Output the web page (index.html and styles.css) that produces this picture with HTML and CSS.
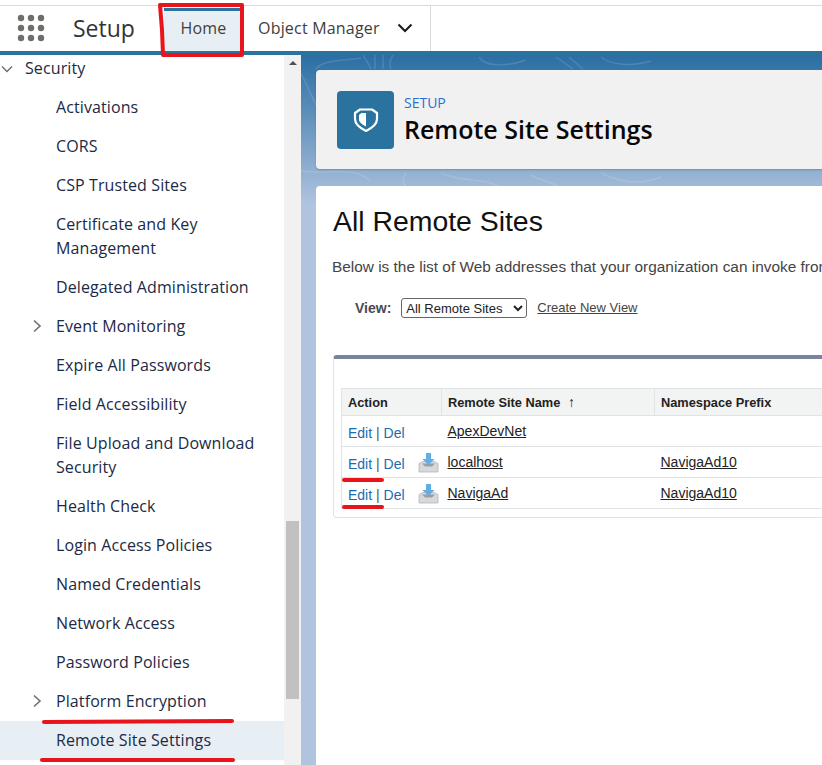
FILE: index.html
```html
<!DOCTYPE html>
<html lang="en">
<head>
    <meta charset="UTF-8">
    <meta name="viewport" content="width=device-width, initial-scale=1.0">
    <title>Remote Site Settings</title>
    <link rel="stylesheet" href="styles.css">
</head>
<body>
    <header class="top-bar">
        <svg class="waffle" width="30" height="30" viewBox="0 0 30 30">
            <g fill="#706e6b">
                <circle cx="5" cy="5" r="3.2"/><circle cx="15" cy="5" r="3.2"/><circle cx="25" cy="5" r="3.2"/>
                <circle cx="5" cy="15" r="3.2"/><circle cx="15" cy="15" r="3.2"/><circle cx="25" cy="15" r="3.2"/>
                <circle cx="5" cy="25" r="3.2"/><circle cx="15" cy="25" r="3.2"/><circle cx="25" cy="25" r="3.2"/>
            </g>
        </svg>
        <span class="app-name">Setup</span>
        <a class="tab tab-active">Home</a>
        <a class="tab tab-object">Object Manager
            <svg width="16" height="10" viewBox="0 0 16 10"><path d="M1.500 1.500 8 8l6.500-6.500" fill="none" stroke="#1a1a1a" stroke-width="2"/></svg>
        </a>
    </header>

    <div class="layout">
        <aside class="sidebar">
            <ul class="nav">
                <li class="nav-item nav-root">
                    <svg class="twist" width="12" height="12" viewBox="0 0 12 12"><path d="M1 3.500 6 8.500l5-5" fill="none" stroke="#706e6b" stroke-width="1.4"/></svg>
                    Security
                </li>
                <li class="nav-item">Activations</li>
                <li class="nav-item">CORS</li>
                <li class="nav-item">CSP Trusted Sites</li>
                <li class="nav-item">Certificate and Key Management</li>
                <li class="nav-item">Delegated Administration</li>
                <li class="nav-item">
                    <svg class="twist-right" width="12" height="14" viewBox="0 0 12 14"><path d="M3 1.500 9 7l-6 5.500" fill="none" stroke="#706e6b" stroke-width="1.6"/></svg>
                    Event Monitoring
                </li>
                <li class="nav-item">Expire All Passwords</li>
                <li class="nav-item">Field Accessibility</li>
                <li class="nav-item">File Upload and Download Security</li>
                <li class="nav-item">Health Check</li>
                <li class="nav-item">Login Access Policies</li>
                <li class="nav-item">Named Credentials</li>
                <li class="nav-item">Network Access</li>
                <li class="nav-item">Password Policies</li>
                <li class="nav-item">
                    <svg class="twist-right" width="12" height="14" viewBox="0 0 12 14"><path d="M3 1.500 9 7l-6 5.500" fill="none" stroke="#706e6b" stroke-width="1.6"/></svg>
                    Platform Encryption
                </li>
                <li class="nav-item nav-current">Remote Site Settings</li>
            </ul>
        </aside>
        <div class="scrollbar">
            <span class="scroll-up"></span>
            <span class="scroll-thumb"></span>
        </div>

        <main class="content">
            <svg class="topo" width="521" height="140" viewBox="0 0 521 140" fill="none" stroke="#ffffff" stroke-opacity="0.13" stroke-width="1.5">
                <path d="M0 18C10 40 20 60 30 80"/>
                <path d="M15 14C22 4 45 6 60 3"/>
                <path d="M62 0C66 6 68 10 70 14M74 0V14M82 0V14M92 0C88 6 88 10 90 14"/>
                <path d="M178 2C184 12 205 12 225 5"/>
                <path d="M255 2 272 14M268 2 282 14M300 2C310 10 330 12 350 6"/>
                <path d="M0 116C30 120 50 110 70 126M105 118C100 124 102 130 108 134"/>
                <path d="M140 118C160 128 190 122 200 134M230 120C240 126 250 126 262 134M300 118C320 128 340 130 360 122"/>
            </svg>

            <section class="page-head">
                <div class="head-icon">
                    <svg width="26" height="26" viewBox="0 0 26 26">
                        <path d="M7 2.500h12l5 3.500v6c0 5.500-5 9-11 12C7 21 2 17.500 2 12V6z" fill="none" stroke="#fff" stroke-width="2.200" stroke-linejoin="round"/>
                        <path d="M13 6H8.500L6 8v4.500c0 2.700 3 5 7 7z" fill="#fff"/>
                    </svg>
                </div>
                <div>
                    <div class="head-kicker">SETUP</div>
                    <h1 class="head-title">Remote Site Settings</h1>
                </div>
            </section>

            <section class="page-body">
                <h2 class="body-title">All Remote Sites</h2>
                <p class="body-intro">Below is the list of Web addresses that your organization can invoke from your users.</p>
                <div class="view-row">
                    <label class="view-label" for="viewSelect">View:</label>
                    <select id="viewSelect" class="view-select">
                        <option>All Remote Sites</option>
                    </select>
                    <a class="view-link">Create New View</a>
                </div>

                <div class="list-box">
                    <table class="list-table">
                        <thead>
                            <tr>
                                <th class="col-action">Action</th>
                                <th class="col-name">Remote Site Name <span class="sort-arrow">↑</span></th>
                                <th class="col-prefix">Namespace Prefix</th>
                                <th></th>
                            </tr>
                        </thead>
                        <tbody>
                            <tr>
                                <td class="action-cell"><a class="row-link">Edit</a> <span class="sep">|</span> <a class="row-link">Del</a></td>
                                <td><a class="name-link">ApexDevNet</a></td>
                                <td></td>
                                <td></td>
                            </tr>
                            <tr>
                                <td class="action-cell">
                                    <a class="row-link">Edit</a> <span class="sep">|</span> <a class="row-link">Del</a>
                                    <svg class="install-icon" width="21" height="21" viewBox="0 0 21 21">
                                        <path d="M1 11.500 6 9h9l5 2.500V20H1z" fill="#d6d8da" stroke="#b4b8ba" stroke-width="0.800"/>
                                        <path d="M4 11.500h13l-3 3H7z" fill="#9a9fa2"/>
                                        <path d="M8 1h5v6h3.500l-6 6-6-6H8z" fill="#62ade3"/>
                                    </svg>
                                </td>
                                <td><a class="name-link">localhost</a></td>
                                <td><a class="name-link">NavigaAd10</a></td>
                                <td></td>
                            </tr>
                            <tr>
                                <td class="action-cell">
                                    <a class="row-link">Edit</a> <span class="sep">|</span> <a class="row-link">Del</a>
                                    <svg class="install-icon" width="21" height="21" viewBox="0 0 21 21">
                                        <path d="M1 11.500 6 9h9l5 2.500V20H1z" fill="#d6d8da" stroke="#b4b8ba" stroke-width="0.800"/>
                                        <path d="M4 11.500h13l-3 3H7z" fill="#9a9fa2"/>
                                        <path d="M8 1h5v6h3.500l-6 6-6-6H8z" fill="#62ade3"/>
                                    </svg>
                                </td>
                                <td><a class="name-link">NavigaAd</a></td>
                                <td><a class="name-link">NavigaAd10</a></td>
                                <td></td>
                            </tr>
                        </tbody>
                    </table>
                </div>
            </section>
        </main>
    </div>

    <!-- red marker annotations drawn on top of the screenshot -->
    <svg class="markup" width="822" height="765" viewBox="0 0 822 765" fill="none" stroke="#e8141c" stroke-width="4" stroke-linecap="round" stroke-linejoin="round">
        <path d="M160 5H242V55H163L162 30z"/>
        <path d="M44 722 232 721"/>
        <path d="M42 760 233 760"/>
        <path d="M344 480H382"/>
        <path d="M344 507H382"/>
    </svg>
</body>
</html>
```

FILE: styles.css
```css
html, body {
    margin: 0;
    height: 765px;
    overflow: hidden;
}

body {
    font-family: "Open Sans", "Noto Sans", sans-serif;
    background: #fff;
    display: flex;
    flex-direction: column;
    position: relative;
}

/* Top bar */
.top-bar {
    display: flex;
    align-items: stretch;
    flex: none;
    height: 45px;
    margin-top: 5px;
    border-top: 1px solid #dddbda;
    border-bottom: 4px solid #2a739e;
}

.waffle {
    margin: 7px 0 0 16px;
}

.app-name {
    font-size: 23px;
    color: #333;
    line-height: 44px;
    margin-left: 27px;
    width: 91px;
}

.tab {
    font-size: 16px;
    letter-spacing: 0.2px;
    color: #3e3e3c;
    display: flex;
    align-items: center;
}

.tab-active {
    width: 77px;
    margin-top: 2px;
    padding: 0 0 6px 2px;
    justify-content: center;
    background: #e8eff4;
    border-top: 3px solid #2a739e;
    box-sizing: border-box;
}

.tab-object {
    padding: 0 0 2px 17px;
    width: 190px;
    box-sizing: border-box;
    border-right: 1px solid #dddbda;
    gap: 17px;
}

/* Main layout */
.layout {
    flex: 1;
    display: flex;
    min-height: 0;
}

.sidebar {
    width: 284px;
    flex: none;
    overflow: hidden;
}

.nav {
    list-style: none;
    margin: 0;
    padding: 0;
}

.nav-item {
    font-size: 16px;
    letter-spacing: 0.1px;
    line-height: 24px;
    color: #1b2a45;
    padding: 7px 20px 8px 56px;
    position: relative;
}

.nav-root {
    padding: 1px 20px 8px 25px;
}

.nav-current {
    background: #e8eff4;
}

.twist {
    position: absolute;
    left: 1px;
    top: 8px;
}

.twist-right {
    position: absolute;
    left: 31px;
    top: 12px;
}

.scrollbar {
    width: 17px;
    flex: none;
    background: #f1f1f1;
    display: flex;
    flex-direction: column;
    align-items: center;
}

.scroll-up {
    margin-top: 6px;
    border-left: 4px solid transparent;
    border-right: 4px solid transparent;
    border-bottom: 4px solid #505050;
}

.scroll-thumb {
    margin-top: 456px;
    width: 13px;
    height: 178px;
    background: #c1c1c1;
}

/* Right side */
.content {
    flex: 1;
    min-width: 0;
    padding: 15px 0 0 15px;
    background: linear-gradient(#2a6ea3, #b0c4df 150px);
    position: relative;
    overflow: hidden;
}

.topo {
    position: absolute;
    left: 0;
    top: 0;
}

.page-head {
    display: flex;
    align-items: center;
    gap: 10px;
    height: 99px;
    padding-left: 21px;
    background: #f1f1f1;
    border-radius: 4px 0 0 4px;
    box-shadow: 0 1px 2px rgba(0, 0, 0, 0.2);
    position: relative;
    width: 600px;
}

.head-icon {
    width: 57px;
    height: 58px;
    border-radius: 4px;
    background: #2a739e;
    display: flex;
    align-items: center;
    justify-content: center;
}

.head-kicker {
    font-size: 14px;
    line-height: 18px;
    color: #2b6fd4;
    margin-top: -2px;
}

.head-title {
    font-size: 25px;
    font-weight: 600;
    line-height: 30px;
    margin: 2px 0 0;
    color: #080707;
}

.page-body {
    margin-top: 17px;
    height: 579px;
    width: 700px;
    padding: 19px 0 0 17px;
    box-sizing: border-box;
    background: #fff;
    border-radius: 4px 0 0 0;
    position: relative;
    font-family: "Liberation Sans", Arial, sans-serif;
    white-space: nowrap;
}

.body-title {
    font-size: 28.4px;
    font-weight: normal;
    line-height: 32px;
    margin: 0;
    color: #111;
}

.body-intro {
    font-size: 15.4px;
    line-height: 18px;
    margin: 21px 0 0 -1px;
    color: #444;
}

.view-row {
    display: flex;
    align-items: center;
    margin: 22px 0 0 22px;
    font-size: 13px;
}

.view-label {
    font-size: 14px;
    font-weight: bold;
    color: #4a4a56;
    margin-right: 10px;
}

.view-select {
    font-family: "Liberation Sans", Arial, sans-serif;
    font-size: 13px;
    width: 126px;
    height: 20px;
    background: #fff;
    color: #222;
    border: 1px solid #666;
    border-radius: 3px;
}

.view-link {
    color: #444;
    text-decoration: underline;
    margin: -2px 0 0 10px;
}

.list-box {
    margin-top: 37px;
    width: 600px;
    height: 163px;
    box-sizing: border-box;
    border: 1px solid #e0e3e5;
    border-top: 4px solid #78839f;
    border-radius: 4px;
    padding: 29px 0 0 7px;
}

.list-table {
    border-collapse: collapse;
    table-layout: fixed;
    width: 600px;
    font-size: 14px;
}

.list-table th {
    height: 27px;
    padding: 0 6px;
    box-sizing: border-box;
    background: #f2f3f3;
    border: 1px solid #e0e3e5;
    font-size: 12.8px;
    text-align: left;
    color: #222;
}

.col-action { width: 100px; }
.col-name { width: 213px; }
.col-prefix { width: 170px; }

.sort-arrow {
    font-size: 14px;
    margin-left: 4px;
}

.list-table td {
    height: 31px;
    padding: 4px 6px 0;
    box-sizing: border-box;
    border-bottom: 1px solid #e0e3e5;
    vertical-align: middle;
}

.list-table td:first-child {
    border-left: 1px solid #e0e3e5;
}

.action-cell {
    position: relative;
}

.row-link {
    color: #1b6cad;
}

.sep {
    color: #555;
}

.install-icon {
    position: absolute;
    left: 76px;
    top: 5px;
}

.name-link {
    color: #222;
    text-decoration: underline;
    position: relative;
    top: -2px;
}

.markup {
    position: absolute;
    left: 0;
    top: 0;
    pointer-events: none;
}
```
